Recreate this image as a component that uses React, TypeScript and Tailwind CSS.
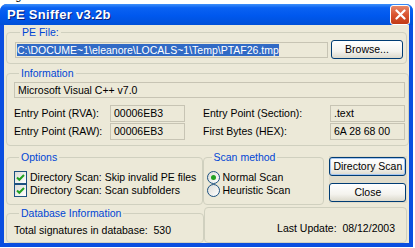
import React from "react";

const groupTitle = "ml-[5px] px-[2px] text-[#0046d5] leading-[13px] whitespace-nowrap";

function Group({ title, className, children }: { title: string; className?: string; children?: React.ReactNode }) {
    return (
        <fieldset className={`border border-[#d0d0bf] rounded-[4px] ${className ?? ""}`}>
            <legend className={groupTitle}>{title}</legend>
            {children}
        </fieldset>
    );
}

function Field({ value, className }: { value: string; className?: string }) {
    return (
        <div className={`h-[16px] border border-[#c7c4b4] bg-[#ece9d8] px-[3px] leading-[14px] whitespace-nowrap overflow-hidden ${className ?? ""}`}>
            {value}
        </div>
    );
}

function XpButton({ label, isDefault, className }: { label: string; isDefault?: boolean; className?: string }) {
    return (
        <button
            className={`h-[19px] rounded-[3px] border border-[#003c74] bg-[linear-gradient(180deg,#ffffff_0%,#f4f3ee_60%,#dcd9cc_100%)] text-black leading-[15px] whitespace-nowrap ${isDefault ? "shadow-[inset_0_0_0_1px_#a6c6f0]" : ""} ${className ?? ""}`}
        >
            {label}
        </button>
    );
}

function Check({ label }: { label: string }) {
    return (
        <div className="flex items-center gap-[3px] h-[13px]">
            <span className="shrink-0 w-[13px] h-[13px] border border-[#1c5180] bg-[linear-gradient(135deg,#dcdcd7_0%,#ffffff_100%)] flex items-center justify-center">
                <svg width="9" height="9" viewBox="0 0 9 9">
                    <path d="M1 4.5 L3.3 6.8 L8 2" stroke="#21a121" strokeWidth="2" fill="none" />
                </svg>
            </span>
            <span className="whitespace-nowrap">{label}</span>
        </div>
    );
}

function Radio({ label, checked }: { label: string; checked?: boolean }) {
    return (
        <div className="flex items-center gap-[3px] h-[13px]">
            <span className="shrink-0 w-[13px] h-[13px] rounded-full border border-[#1c5180] bg-[linear-gradient(135deg,#dcdcd7_0%,#ffffff_100%)] flex items-center justify-center">
                {checked && <span className="w-[5px] h-[5px] rounded-full bg-[#21a121]" />}
            </span>
            <span className="whitespace-nowrap">{label}</span>
        </div>
    );
}

export default function App() {
    return (
        <div className="w-[415px] h-[248px] bg-white overflow-hidden text-[10.5px] text-black font-['Liberation_Sans',Arial,sans-serif]">
            <div className="h-[4px] overflow-hidden">
                <div className="-mt-[10px] ml-[6px] text-[11px] leading-[12px] whitespace-nowrap">Figure 3. PE Sniffer main window</div>
            </div>
            <div className="w-[413px] h-[243px] rounded-t-[7px] bg-[#0a4ee0] flex flex-col">
                <div className="h-[26px] rounded-t-[7px] bg-[linear-gradient(180deg,#3d8ff9_0%,#0a62f2_18%,#0058ee_55%,#0050d8_100%)] flex items-center justify-between pl-[7px] pr-[3px]">
                    <span className="text-white font-bold text-[13px] tracking-[0.3px] [text-shadow:1px_1px_0_#0a1f7a]">PE Sniffer v3.2b</span>
                    <span className="w-[20px] h-[20px] rounded-[3px] border border-white bg-[linear-gradient(180deg,#e9886a_0%,#d9532e_50%,#c23b17_100%)] flex items-center justify-center">
                        <svg width="11" height="11" viewBox="0 0 11 11">
                            <path d="M1.5 1.5 L9.5 9.5 M9.5 1.5 L1.5 9.5" stroke="white" strokeWidth="2.2" strokeLinecap="round" />
                        </svg>
                    </span>
                </div>
                <div className="mx-[4px] mb-[4px] flex-1 bg-[#ece9d8] px-[2px] pt-[1px] flex flex-col gap-[3px]">
                    <Group title="PE File:" className="pl-[8px] pr-[3px] pb-[4px]">
                        <div className="flex items-center justify-between mt-[1px]">
                            <div className="w-[313px] h-[16px] border border-[#c7c4b4] bg-[#ece9d8] pl-[1px] leading-[14px] whitespace-nowrap overflow-hidden">
                                <span className="bg-[#316ac5] text-white">C:\DOCUME~1\eleanore\LOCALS~1\Temp\PTAF26.tmp</span>
                            </div>
                            <XpButton label="Browse..." className="w-[72px]" />
                        </div>
                    </Group>
                    <Group title="Information" className="pl-[7px] pr-[3px] pb-[5px]">
                        <Field value="Microsoft Visual C++ v7.0" className="mt-[2px]" />
                        <div className="mt-[7px] flex flex-col gap-[1px]">
                            <div className="flex items-center">
                                <span className="w-[96px] whitespace-nowrap">Entry Point (RVA):</span>
                                <Field value="00006EB3" className="w-[75px] h-[17px]" />
                                <span className="ml-[18px] w-[127px] whitespace-nowrap">Entry Point (Section):</span>
                                <Field value=".text" className="w-[75px] h-[17px]" />
                            </div>
                            <div className="flex items-center">
                                <span className="w-[96px] whitespace-nowrap">Entry Point (RAW):</span>
                                <Field value="00006EB3" className="w-[75px] h-[17px]" />
                                <span className="ml-[18px] w-[127px] whitespace-nowrap">First Bytes (HEX):</span>
                                <Field value="6A 28 68 00" className="w-[75px] h-[17px]" />
                            </div>
                        </div>
                    </Group>
                    <div className="flex mt-[2px]">
                        <Group title="Options" className="w-[198px] h-[54px] pl-[7px]">
                            <div className="mt-[7px] flex flex-col">
                                <Check label="Directory Scan: Skip invalid PE files" />
                                <Check label="Directory Scan: Scan subfolders" />
                            </div>
                        </Group>
                        <Group title="Scan method" className="w-[122px] h-[54px] pl-[3px]">
                            <div className="mt-[7px] flex flex-col">
                                <Radio label="Normal Scan" checked />
                                <Radio label="Heuristic Scan" />
                            </div>
                        </Group>
                        <div className="ml-[5px] mt-[5px] w-[79px] h-[47px] bg-[#e0dccb] flex flex-col items-center justify-between py-[1px]">
                            <XpButton label="Directory Scan" isDefault className="w-[77px]" />
                            <XpButton label="Close" className="w-[77px]" />
                        </div>
                    </div>
                    <div className="flex -mt-[1px]">
                        <Group title="Database Information" className="w-[198px] h-[36px] pl-[7px]">
                            <div className="mt-[3px] whitespace-nowrap">Total signatures in database:&nbsp;&nbsp;530</div>
                        </Group>
                        <fieldset className="flex-1 h-[36px] border border-[#d0d0bf] rounded-[4px] pr-[11px] pt-[8px] flex items-center justify-end">
                            <span className="whitespace-nowrap">Last Update:&nbsp;&nbsp;08/12/2003</span>
                        </fieldset>
                    </div>
                </div>
            </div>
        </div>
    );
}
